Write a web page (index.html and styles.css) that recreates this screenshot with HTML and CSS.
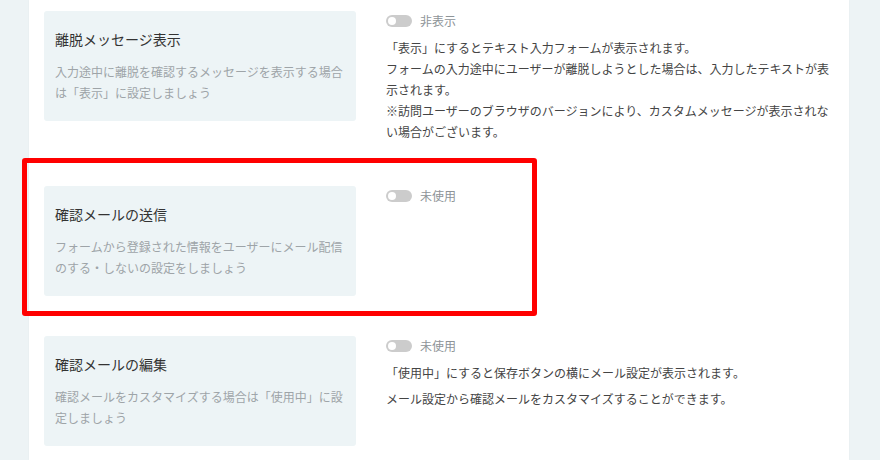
FILE: index.html
```html
<!DOCTYPE html>
<html lang="ja">
<head>
<meta charset="utf-8">
<title>設定</title>
<link rel="stylesheet" href="styles.css">
</head>
<body>
<div class="panel">
  <div class="row row-first">
    <div class="card">
      <div class="card-title">離脱メッセージ表示</div>
      <div class="card-desc">入力途中に離脱を確認するメッセージを表示する場合は「表示」に設定しましょう</div>
    </div>
    <div class="setting">
      <div class="switch-line"><span class="switch"><span class="knob"></span></span><span class="switch-label">非表示</span></div>
      <p class="note">「表示」にするとテキスト入力フォームが表示されます。<br>フォームの入力途中にユーザーが離脱しようとした場合は、入力したテキストが表示されます。<br>※訪問ユーザーのブラウザのバージョンにより、カスタムメッセージが表示されない場合がございます。</p>
    </div>
  </div>
  <div class="row">
    <div class="card">
      <div class="card-title">確認メールの送信</div>
      <div class="card-desc">フォームから登録された情報をユーザーにメール配信のする・しないの設定をしましょう</div>
    </div>
    <div class="setting">
      <div class="switch-line"><span class="switch"><span class="knob"></span></span><span class="switch-label">未使用</span></div>
    </div>
  </div>
  <div class="row">
    <div class="card">
      <div class="card-title">確認メールの編集</div>
      <div class="card-desc">確認メールをカスタマイズする場合は「使用中」に設定しましょう</div>
    </div>
    <div class="setting">
      <div class="switch-line"><span class="switch"><span class="knob"></span></span><span class="switch-label">未使用</span></div>
      <p class="note">「使用中」にすると保存ボタンの横にメール設定が表示されます。</p>
      <p class="note">メール設定から確認メールをカスタマイズすることができます。</p>
    </div>
  </div>
</div>
<div class="highlight"></div>
</body>
</html>
```

FILE: styles.css
```css
html, body {
  margin: 0;
  padding: 0;
}
body {
  background: #edf3f5;
  font-family: "Noto Sans CJK JP", "Noto Sans", sans-serif;
  height: 460px;
  overflow: hidden;
  position: relative;
}
.panel {
  margin-left: 29px;
  width: 820px;
  min-height: 460px;
  background: #ffffff;
  box-sizing: border-box;
  padding: 11px 15px 0 15px;
  box-shadow: 0 0 2px rgba(0, 0, 0, 0.04);
}
.row {
  display: flex;
  gap: 30px;
  margin-bottom: 40px;
  align-items: flex-start;
}
.row-first {
  margin-bottom: 39px;
}
.card {
  flex: none;
  width: 312px;
  height: 110px;
  box-sizing: border-box;
  padding: 0 11px;
  background: #edf4f6;
  border-radius: 3px;
  display: flex;
  flex-direction: column;
  justify-content: center;
}
.card-title {
  font-size: 14px;
  line-height: 20px;
  color: #333333;
  margin-bottom: 12px;
}
.card-desc {
  font-size: 12px;
  line-height: 21px;
  color: #9ea4a8;
}
.setting {
  width: 448px;
  flex: none;
}
.switch-line {
  display: flex;
  align-items: center;
  height: 20px;
  margin-bottom: 6px;
}
.switch {
  width: 26px;
  height: 12px;
  border-radius: 6px;
  background: #cccccc;
  position: relative;
  flex: none;
}
.knob {
  position: absolute;
  left: 2px;
  top: 2px;
  width: 8px;
  height: 8px;
  border-radius: 50%;
  background: #ffffff;
}
.switch-label {
  margin-left: 8px;
  font-size: 12px;
  line-height: 20px;
  color: #8e9498;
}
.note {
  margin: 0 0 5px 0;
  font-size: 12px;
  line-height: 21px;
  color: #444444;
}
.highlight {
  position: absolute;
  left: 22px;
  top: 158px;
  width: 515px;
  height: 158px;
  box-sizing: border-box;
  border: 5px solid #ff0000;
  border-radius: 3px;
}
```
